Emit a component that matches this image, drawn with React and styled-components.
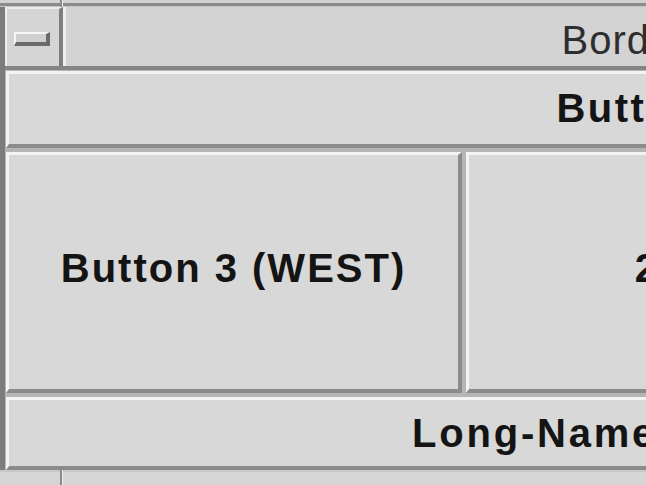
import React from "react";
import styled, { createGlobalStyle } from "styled-components";

const Global = createGlobalStyle`
  html, body { margin: 0; padding: 0; background: #d6d6d6; overflow: hidden; }
  #root { width: 646px; height: 485px; overflow: hidden; }
`;

const Frame = styled.div`
  width: 1490px;
  height: 485px;
  display: flex;
  flex-direction: column;
  background: #d6d6d6;
`;

const EdgeStrip = styled.div`
  height: ${(p) => p.$h}px;
  display: flex;
  flex: none;
  background: ${(p) =>
    p.$top
      ? "linear-gradient(#d2d2d2 0 3px, #8c8c8c 3px 6px, #c4c4c4 6px)"
      : "linear-gradient(#c8c8c8 0 2px, #d6d6d6 2px)"};
`;

const EdgeNotch = styled.div`
  width: 3px;
  margin-left: 60px;
  background: linear-gradient(90deg, #8a8a8a 0 2px, #f0f0f0 2px);
`;

const Window = styled.div`
  flex: 1;
  display: flex;
  flex-direction: column;
  border-left: 5px solid #7c7c7c;
  min-height: 0;
`;

const TitleBar = styled.div`
  height: 59px;
  flex: none;
  display: flex;
  background: #d3d3d3;
  border-bottom: 4px solid #858585;
`;

const MenuBox = styled.div`
  width: 52px;
  display: flex;
  align-items: center;
  justify-content: center;
  background: #d5d5d5;
  border-top: 2px solid #ececec;
  border-left: 2px solid #ececec;
  border-right: 4px solid #7e7e7e;
`;

const MinusIcon = styled.div`
  width: 30px;
  height: 8px;
  margin-top: 2px;
  margin-right: 2px;
  background: #d0d0d0;
  border-top: 2px solid #f6f6f6;
  border-left: 2px solid #f6f6f6;
  border-bottom: 4px solid #6a6a6a;
  border-right: 4px solid #6a6a6a;
`;

const TitleText = styled.div`
  flex: 1;
  display: flex;
  align-items: center;
  justify-content: center;
  padding: 8px 70px 0 0;
  border-left: 3px solid #efefef;
  font-family: "Liberation Sans", Arial, sans-serif;
  font-size: 40px;
  letter-spacing: 1px;
  color: #2e2e2e;
  white-space: nowrap;
`;

const Grid = styled.div`
  flex: 1;
  display: grid;
  grid-template-columns: 456px 1fr 432px;
  grid-template-rows: 77px 1fr 73px;
  gap: 4px;
  padding: 1px 0 0 1px;
  background: #b5b5b5;
  min-height: 0;
`;

const Button = styled.div`
  grid-column: ${(p) => p.$col || "auto"};
  display: flex;
  align-items: center;
  justify-content: center;
  padding-bottom: ${(p) => p.$lift || 0}px;
  background: #d8d8d8;
  border-top: 3px solid #f4f4f4;
  border-left: 3px solid #f4f4f4;
  border-bottom: 4px solid #8b8b8b;
  border-right: 4px solid #8b8b8b;
  font-family: "Liberation Sans", Arial, sans-serif;
  font-weight: bold;
  font-size: 40px;
  letter-spacing: ${(p) => p.$spacing ?? 2.5}px;
  color: #141414;
  white-space: nowrap;
  overflow: hidden;
`;

export default function App() {
  return (
    <>
      <Global />
      <Frame>
        <EdgeStrip $h={7} $top>
          <EdgeNotch />
        </EdgeStrip>
        <Window>
          <TitleBar>
            <MenuBox>
              <MinusIcon />
            </MenuBox>
            <TitleText>BorderLayoutDemo</TitleText>
          </TitleBar>
          <Grid>
            <Button $col="1 / 4" $lift={2}>Button 1 (NORTH)</Button>
            <Button $lift={7} $spacing={2}>Button 3 (WEST)</Button>
            <Button $lift={7}>2 (CENTER)</Button>
            <Button $lift={7} $spacing={2}>Button 5 (EAST)</Button>
            <Button $col="1 / 4" $spacing={2.8}>Long-Named Button 4 (SOUTH)</Button>
          </Grid>
        </Window>
        <EdgeStrip $h={15}>
          <EdgeNotch />
        </EdgeStrip>
      </Frame>
    </>
  );
}
